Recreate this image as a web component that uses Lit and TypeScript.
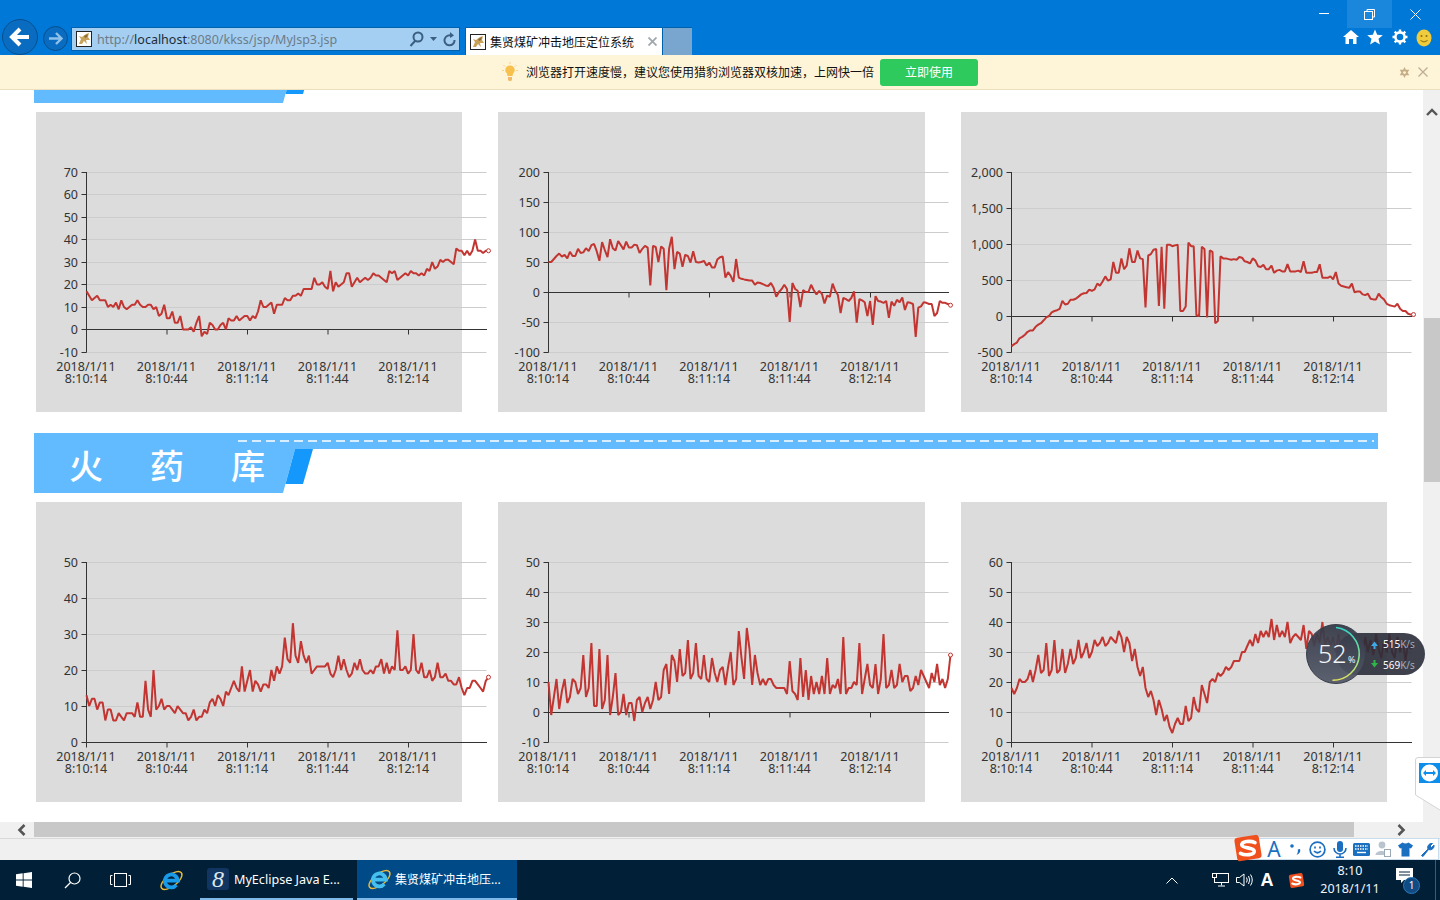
import { LitElement, html, css, svg } from "lit";
import { customElement, property } from "lit/decorators.js";

const D1 = [17,15,13,14,15,13,13,13,10,11,10,12,9,13,10,9,10,11,11,13,11,10,10,11,11,9,10,6,7,11,5,5,8,3,3,6,0,0,0,1,-1,3,6,-3,-1,-2,3,2,0,0,2,3,0,5,4,4,6,4,5,6,6,4,6,5,8,13,10,10,11,12,7,11,11,11,14,13,13,15,15,16,15,18,18,18,18,23,20,20,21,19,18,26,17,21,19,20,21,25,25,19,21,23,21,22,23,22,23,25,24,24,23,22,21,26,25,26,22,23,24,25,24,26,25,25,24,25,24,27,26,30,27,28,31,30,31,31,30,29,36,35,35,33,35,33,35,40,35,35,34,35,35];
const D2 = [50,50,55,60,64,59,62,56,67,60,60,72,65,66,73,68,78,80,68,52,83,70,58,88,73,69,85,78,71,84,74,74,79,78,65,72,77,74,11,77,75,50,76,72,3,72,92,38,67,64,42,62,60,49,68,50,49,50,52,44,49,41,41,54,58,59,24,33,27,17,55,24,22,21,20,19,19,12,16,15,13,11,10,15,7,-8,0,5,12,5,-50,15,5,2,-25,3,0,0,12,3,-4,2,-3,-19,-6,-8,14,2,-5,-35,-10,-12,-15,-10,1,-51,-12,-14,-17,-40,-15,-55,-7,-15,-16,-18,-15,-43,-16,-23,-13,-17,-9,-30,-17,-18,-20,-75,-26,-24,-17,-18,-20,-20,-40,-35,-15,-18,-18,-20,-22];
const D3 = [-420,-390,-370,-310,-290,-260,-220,-200,-200,-150,-120,-100,-60,-20,0,50,70,80,100,210,160,170,225,225,240,270,300,315,320,365,350,370,450,420,480,550,490,510,750,600,600,800,650,700,940,750,750,910,800,790,120,840,860,920,930,140,960,100,990,990,970,980,990,70,70,130,1020,970,970,10,0,960,930,-20,910,890,-100,-70,830,800,800,790,780,790,780,820,810,760,750,730,800,770,690,680,710,650,650,700,600,630,640,620,620,720,620,620,620,630,610,760,600,600,600,610,610,720,530,530,530,550,510,610,450,420,410,400,390,450,330,340,340,300,290,310,240,230,230,310,260,230,170,150,140,130,170,100,70,70,30,20,20];
const D4 = [13,10,12,12,9,11,11,6,9,9,6,6,8,7,6,8,8,8,7,11,7,7,17,9,7,20,9,10,12,9,10,10,9,8,10,9,8,8,6,7,9,6,7,7,9,8,11,12,10,13,12,10,14,13,15,17,15,14,21,14,17,20,14,17,16,14,16,16,15,20,17,21,19,21,29,23,22,33,24,22,28,24,22,24,19,20,21,21,21,21,22,19,18,20,24,20,23,20,18,19,22,20,23,20,19,19,20,19,21,21,23,19,22,19,21,20,31,20,20,21,19,20,30,20,19,22,18,18,20,17,18,22,18,18,19,17,17,16,16,18,15,13,15,15,17,17,16,15,14,17,18];
const D5 = [10,-1,5,11,1,7,11,3,5,11,10,6,8,19,5,8,23,2,2,21,1,4,19,-1,5,13,-1,0,6,-1,3,3,-3,4,5,0,3,5,1,4,10,4,5,14,16,6,19,17,10,21,12,13,24,11,13,23,12,11,19,11,10,18,13,10,14,15,9,15,20,9,11,27,18,11,28,21,9,19,13,9,11,9,11,11,9,8,8,8,8,6,17,7,6,4,18,5,14,4,12,6,10,6,12,6,18,6,9,8,11,6,25,6,8,8,10,9,23,6,11,16,9,8,16,6,11,26,8,9,14,8,9,16,10,12,12,7,8,12,9,14,12,10,8,13,10,16,9,11,8,11,19];
const D6 = [18,16,18,21,20,20,21,24,20,24,29,23,24,33,22,24,34,23,24,31,23,26,31,26,28,34,28,30,33,28,30,34,32,33,35,32,33,35,34,33,37,35,30,35,33,27,31,25,22,25,18,15,17,14,9,14,11,7,9,5,3,6,8,6,6,12,7,8,15,11,10,19,16,13,20,21,20,23,22,23,25,24,25,27,27,27,30,30,32,34,32,36,33,37,35,37,35,41,34,39,35,37,35,40,33,35,36,35,34,39,31,37,36,32,36,33,40,32,35,32,35,30,36,30,34,33,35,31,34,31,33,28,35,30,34,29,36,31,28,34,30,36,30,28,35,30,34,27,33,31,33];

const X_TICKS = [50.5, 131, 211.5, 292, 372.5];
const X_TIMES = ["8:10:14", "8:10:44", "8:11:14", "8:11:44", "8:12:14"];

@customElement("line-chart")
class LineChart extends LitElement {
  @property({ attribute: false }) data: number[] = [];
  @property({ attribute: false }) ticks: number[] = [];
  @property({ type: Boolean }) marker = true;

  static styles = css`
    :host { display: block; background: #dcdcdc; height: 300px; }
    svg { display: block; overflow: visible; font-family: "Noto Sans", sans-serif; font-size: 12.5px; }
    .grid { stroke: #ccc; stroke-width: 1; }
    .axis { stroke: #333; stroke-width: 1; fill: none; }
    .lbl { fill: #333; }
    .series { fill: none; stroke: #c23531; stroke-width: 2; stroke-linejoin: bevel; }
    .dot { fill: #fff; stroke: #c23531; stroke-width: 1; }
  `;

  render() {
    const { data, ticks } = this;
    const max = ticks[0];
    const min = ticks[ticks.length - 1];
    const y = (v: number) => 60 + ((max - v) / (max - min)) * 180;
    const x = (i: number) => 50.5 + i * 2.68;
    const yZero = Math.floor(y(0)) + 0.5;
    const pts = data.map((v, i) => `${x(i).toFixed(1)},${y(v).toFixed(1)}`).join(" ");
    const last = data.length - 1;
    return html`<svg width="426" height="300" viewBox="0 0 426 300">
      ${ticks.map((t) => {
        const gy = Math.floor(y(t)) + 0.5;
        return svg`
          <line class="grid" x1="50.5" x2="450.5" y1=${gy} y2=${gy}></line>
          <line class="axis" x1="45.5" x2="50.5" y1=${gy} y2=${gy}></line>
          <text class="lbl" x="42" y=${gy + 4.5} text-anchor="end">${t.toLocaleString("en-US")}</text>`;
      })}
      <line class="axis" x1="50.5" x2="50.5" y1="60" y2="240.5"></line>
      <line class="axis" x1="50.5" x2="451" y1=${yZero} y2=${yZero}></line>
      ${X_TICKS.map(
        (tx, i) => svg`
          <line class="axis" x1=${tx} x2=${tx} y1=${yZero} y2=${yZero + 5}></line>
          <text class="lbl" x=${tx - 0.5} y="259.3" text-anchor="middle">2018/1/11</text>
          <text class="lbl" x=${tx - 0.5} y="271.3" text-anchor="middle">${X_TIMES[i]}</text>`
      )}
      <polyline class="series" points=${pts}></polyline>
      ${this.marker ? svg`<circle class="dot" cx=${x(last)} cy=${y(data[last])} r="2"></circle>` : ""}
    </svg>`;
  }
}

const tomcat = (s: number) => html`<svg width=${s} height=${s} viewBox="0 0 16 16">
  <rect x="0.5" y="0.5" width="15" height="15" fill="#fff" stroke="#222"></rect>
  <path d="M3 13 L5 8 L3 5 L6 6 L10 3 L13 2 L12 6 L14 9 L10 9 L11 13 L8 10 L6 13 Z" fill="#c9a25a"></path>
  <path d="M8 5 L12 3 L11 6 L9 7 Z" fill="#8a6a30"></path>
</svg>`;

const ieLogo = (s: number, tone: string) => html`<svg width=${s} height=${s} viewBox="0 0 24 24">
  <ellipse cx="12" cy="12" rx="12" ry="5.5" transform="rotate(-38 12 12)" fill="none" stroke="#e8b93a" stroke-width="1.4"></ellipse>
  <path d="M6.5 12 H18 A6.2 6.2 0 1 0 16.6 16.4" fill="none" stroke=${tone} stroke-width="3.6"></path>
</svg>`;

const sLogo = (s: number) => html`<svg width=${s} height=${s} viewBox="0 0 28 28">
  <rect x="2.5" y="3" width="23" height="22" rx="3" transform="rotate(-9 14 14)" fill="#f0501e"></rect>
  <path d="M20.5 9 C16 6.8 8 7.8 8.2 11.2 C8.4 14.6 19.8 13.2 19.8 17 C19.8 20.5 11.5 21.3 7 19" fill="none" stroke="#fff" stroke-width="3.4" stroke-linecap="round"></path>
</svg>`;

@customElement("app-root")
class AppRoot extends LitElement {
  static styles = css`
    :host { display: flex; flex-direction: column; position: relative; width: 1440px; height: 900px; overflow: hidden; font-family: "Noto Sans", "Noto Sans CJK SC", sans-serif; background: #fff; }
    svg { display: block; flex: none; }

    .chrome { height: 55px; background: #0078d7; flex: none; }
    .title-row { height: 27px; display: flex; justify-content: flex-end; padding-right: 2px; }
    .win-btn { width: 45px; height: 28px; display: flex; align-items: center; justify-content: center; }
    .win-btn.close { width: 46px; }
    .win-btn.hot { background: #1a86dc; position: relative; }
    .nav-row { height: 28px; display: flex; padding-left: 2px; }
    .back { width: 36px; height: 36px; margin-top: -8px; }
    .fwd { width: 25px; height: 25px; margin: -1px 0 0 5px; }
    .addr { width: 389px; height: 24px; margin-left: 3px; box-sizing: border-box; background: #a5cff2; border: 1px solid #0062ad; display: flex; align-items: center; padding: 0 3px 0 4px; font-size: 12.5px; color: #6b7c8a; white-space: nowrap; gap: 5px; }
    .addr b { font-weight: 400; color: #1c2c38; }
    .addr .url { flex: 1; }
    .addr .tools { display: flex; align-items: center; gap: 6px; }
    .tab { width: 198px; height: 28px; margin-left: 5px; box-sizing: border-box; background: #fff; border: 1px solid #0062ad; border-bottom: none; display: flex; align-items: center; padding: 0 5px 0 4px; gap: 4px; font-size: 12px; color: #111; white-space: nowrap; }
    .tab span { flex: 1; }
    .newtab { width: 29px; height: 28px; background: #78a6cf; border-top: 1px solid #0062ad; box-sizing: border-box; }
    .spacer { flex: 1; }
    .tool-icons { display: flex; padding-right: 4px; padding-top: 2px; height: 18px; }
    .tool-icons div { width: 24.3px; display: flex; justify-content: center; }

    .notice { height: 35px; flex: none; box-sizing: border-box; background: #fef5d8; border-bottom: 1px solid #ecdfc0; display: flex; align-items: center; font-size: 12px; color: #111; padding-left: 502px; padding-right: 12px; }
    .notice .msg { margin-left: 8px; white-space: nowrap; width: 350px; }
    .go { margin-left: 4px; width: 98px; height: 27px; background: #2fca5e; border-radius: 3px; color: #fff; display: flex; align-items: center; justify-content: center; }
    .notice-end { margin-left: auto; display: flex; gap: 8px; align-items: center; }

    .middle { flex: 1; min-height: 0; display: flex; }
    .page { width: 1423px; overflow: hidden; background: #fff; }
    .sections { margin-top: -47px; padding-left: 36px; display: flex; flex-direction: column; gap: 21px; }
    .banner { margin-left: -2px; height: 60px; margin-bottom: 9px; }
    .banner text { font-family: "Noto Sans CJK SC", sans-serif; font-size: 34px; font-weight: 500; fill: #fff; text-anchor: middle; }
    .row { display: grid; grid-template-columns: 426px 427px 426px; column-gap: 36px; }
    .vbar { width: 17px; background: #f0f0f0; display: flex; flex-direction: column; align-items: center; }
    .vbar .up { height: 44px; display: flex; align-items: center; justify-content: center; }
    .vbar .thumb { margin-top: 184px; margin-left: 1px; width: 16px; height: 164px; background: #c8c8c8; }

    .hbar { height: 16px; flex: none; background: #f0f0f0; display: flex; align-items: flex-start; }
    .hbar .arr { width: 34px; height: 15px; display: flex; align-items: center; justify-content: center; padding-left: 8px; box-sizing: border-box; }
    .hbar .thumb { width: 1320px; height: 15px; background: #c8c8c8; }
    .hbar .arr.right { margin-left: 39px; width: 16px; padding: 0; }
    .status { height: 22px; flex: none; box-sizing: border-box; background: #f0f0f0; border-top: 1px solid #d9d9d9; display: flex; justify-content: flex-end; padding-right: 1px; }
    .ime-logo { margin-top: -6px; margin-right: -20px; position: relative; z-index: 1; }
    .ime { width: 196px; height: 22px; margin-top: -1px; box-sizing: border-box; background: #fff; border: 1px solid #c9dcec; display: flex; align-items: center; padding-left: 19px; }
    .ime div { width: 22px; display: flex; justify-content: center; align-items: center; font-size: 21px; line-height: 20px; color: #1b6fc0; }

    .taskbar { height: 40px; flex: none; background: #012038; display: flex; align-items: stretch; color: #fff; }
    .tb-slot { display: flex; align-items: center; justify-content: center; width: 48px; }
    .tb-slot.ie { padding-left: 6px; box-sizing: border-box; }
    .task { display: flex; align-items: center; box-sizing: border-box; border-bottom: 2px solid #7fb9e8; white-space: nowrap; }
    .task.eclipse { width: 153px; margin-left: 8px; padding-left: 7px; font-size: 12.6px; gap: 5px; }
    .task.active { width: 160px; margin-left: 4px; padding-left: 10px; background: #004a87; font-size: 12px; gap: 3px; }
    .m8 { width: 22px; height: 22px; background: #113560; border-radius: 3px; display: flex; align-items: center; justify-content: center; font: italic 24px/22px "Liberation Serif", serif; color: #dfe7ef; }
    .tray { margin-left: auto; display: flex; align-items: stretch; }
    .tb-slot.t24 { width: 24px; }
    .tb-slot.net { width: 24px; margin-left: 24px; }
    .tb-slot.a { width: 22px; font-size: 18px; font-weight: 700; font-family: "Liberation Sans", sans-serif; }
    .tb-slot.s { width: 24px; margin-left: 6px; }
    .tb-slot.note { width: 36px; }
    .clock { width: 80px; margin-left: 2px; display: flex; flex-direction: column; align-items: center; justify-content: center; font-size: 12.5px; line-height: 18px; color: #f2f5f8; }
    .badge-wrap { position: relative; width: 24px; height: 24px; }
    .badge { position: absolute; left: 7px; top: 9px; width: 15px; height: 15px; border-radius: 50%; background: #0f4b84; border: 1px solid #2e78b8; font-size: 10px; line-height: 15px; text-align: center; }
    .desk { width: 9px; border-right: 1px solid #45596a; margin-right: 4px; }

    .speed { position: absolute; left: 1306px; top: 624px; }
    .speed text { font-family: "Noto Sans", sans-serif; }
    .viewer { position: absolute; left: 1415px; top: 757px; }
  `;

  banner(text?: string[]) {
    return html`<svg class="banner" width="1344" height="60" viewBox="0 0 1344 60">
      <polygon points="0,0 1344,0 1344,16 261,16 249,60 0,60" fill="#62bbff"></polygon>
      <polygon points="261,16 279,16 269,51 251.5,51" fill="#1598fb"></polygon>
      <line x1="204" x2="1340" y1="8" y2="8" stroke="#fff" stroke-width="1.5" stroke-dasharray="9 5"></line>
      ${text
        ? svg`<text x="52" y="46">${text[0]}</text><text x="133" y="46">${text[1]}</text><text x="214" y="46">${text[2]}</text>`
        : ""}
    </svg>`;
  }

  render() {
    const t1 = [70, 60, 50, 40, 30, 20, 10, 0, -10];
    const t2 = [200, 150, 100, 50, 0, -50, -100];
    const t3 = [2000, 1500, 1000, 500, 0, -500];
    const t4 = [50, 40, 30, 20, 10, 0];
    const t5 = [50, 40, 30, 20, 10, 0, -10];
    const t6 = [60, 50, 40, 30, 20, 10, 0];
    return html`
      <header class="chrome">
        <div class="title-row">
          <div class="win-btn"><svg width="11" height="2"><rect width="10" height="1" fill="#fff"></rect></svg></div>
          <div class="win-btn hot"><svg width="11" height="11" viewBox="0 0 11 11" fill="none" stroke="#fff"><path d="M3 2.5 V0.5 H10.5 V8 H8.5"></path><rect x="0.5" y="2.5" width="8" height="8"></rect></svg></div>
          <div class="win-btn close"><svg width="11" height="11" viewBox="0 0 11 11" stroke="#fff"><path d="M0.5 0.5 L10.5 10.5 M10.5 0.5 L0.5 10.5"></path></svg></div>
        </div>
        <div class="nav-row">
          <svg class="back" viewBox="0 0 36 36">
            <circle cx="18" cy="18" r="17.5" fill="#0a6cc0" stroke="#04508f"></circle>
            <path d="M27 18 H11 M18 10 L10 18 L18 26" fill="none" stroke="#fff" stroke-width="4"></path>
          </svg>
          <svg class="fwd" viewBox="0 0 25 25">
            <circle cx="12.5" cy="12.5" r="12" fill="#0a6cc0" stroke="#04508f"></circle>
            <path d="M6 12.5 H18 M13 7 L18.5 12.5 L13 18" fill="none" stroke="#8fc0ea" stroke-width="2.4"></path>
          </svg>
          <div class="addr">
            ${tomcat(16)}
            <span class="url">http://<b>localhost</b>:8080/kkss/jsp/MyJsp3.jsp</span>
            <span class="tools">
              <svg width="15" height="16" viewBox="0 0 15 16" fill="none" stroke="#3a5f80" stroke-width="2"><circle cx="9" cy="6" r="4.5"></circle><path d="M6 10 L1.5 15"></path></svg>
              <svg width="7" height="4" viewBox="0 0 7 4"><path d="M0 0 H7 L3.5 4 Z" fill="#3a5f80"></path></svg>
              <svg width="13" height="15" viewBox="0 0 13 15" fill="none" stroke="#3a5f80" stroke-width="2"><path d="M9 4 A5 5 0 1 0 11.5 8"></path><path d="M7 0 L11 3.5 L7 6 Z" fill="#3a5f80" stroke="none"></path></svg>
            </span>
          </div>
          <div class="tab">
            ${tomcat(16)}
            <span>集贤煤矿冲击地压定位系统</span>
            <svg width="9" height="9" viewBox="0 0 9 9" stroke="#a0a8ae" stroke-width="1.8"><path d="M0.5 0.5 L8.5 8.5 M8.5 0.5 L0.5 8.5"></path></svg>
          </div>
          <div class="newtab"></div>
          <div class="spacer"></div>
          <div class="tool-icons">
            <div><svg width="16" height="16" viewBox="0 0 16 16"><path d="M8 1 L16 8 H13.5 V15 H10 V10 H6 V15 H2.5 V8 H0 Z" fill="#fff"></path></svg></div>
            <div><svg width="16" height="16" viewBox="0 0 16 16"><path d="M8 0.5 L10.2 5.8 L15.8 6.2 L11.5 9.8 L12.9 15.4 L8 12.4 L3.1 15.4 L4.5 9.8 L0.2 6.2 L5.8 5.8 Z" fill="#fff"></path></svg></div>
            <div><svg width="16" height="16" viewBox="0 0 16 16"><circle cx="8" cy="8" r="4.6" fill="none" stroke="#fff" stroke-width="2.6"></circle><path d="M8 0.5 V3 M8 13 V15.5 M0.5 8 H3 M13 8 H15.5 M2.7 2.7 L4.5 4.5 M11.5 11.5 L13.3 13.3 M13.3 2.7 L11.5 4.5 M4.5 11.5 L2.7 13.3" stroke="#fff" stroke-width="2.4"></path></svg></div>
            <div><svg width="16" height="18" viewBox="0 0 16 18"><ellipse cx="8" cy="9" rx="7.5" ry="8.5" fill="#f0cb3c"></ellipse><circle cx="5.5" cy="7" r="1" fill="#8a6d10"></circle><circle cx="10.5" cy="7" r="1" fill="#8a6d10"></circle><path d="M4.5 11.5 Q8 14.5 11.5 11.5" fill="none" stroke="#8a6d10"></path></svg></div>
          </div>
        </div>
      </header>

      <div class="notice">
        <svg width="16" height="20" viewBox="0 0 16 20">
          <path d="M8 3.5 A4.5 4.5 0 0 1 11 11.5 L10.5 14 H5.5 L5 11.5 A4.5 4.5 0 0 1 8 3.5 Z" fill="#f8c04c"></path>
          <path d="M6 15 H10 V18 L9 19 H7 L6 18 Z" fill="#f3b96a"></path>
          <path d="M8 0 V2 M1.5 3 L3 4.5 M14.5 3 L13 4.5 M0 8.5 H2 M14 8.5 H16" stroke="#f8d48c"></path>
        </svg>
        <span class="msg">浏览器打开速度慢，建议您使用猎豹浏览器双核加速，上网快一倍</span>
        <div class="go">立即使用</div>
        <div class="notice-end">
          <svg width="11" height="11" viewBox="0 0 16 16"><path d="M8 0 L10 4 H15 L12.5 8 L15 12 H10 L8 16 L6 12 H1 L3.5 8 L1 4 H6 Z" fill="#c5ad86"></path><circle cx="8" cy="8" r="2" fill="#fef5d8"></circle></svg>
          <svg width="10" height="10" viewBox="0 0 10 10" stroke="#bfae94" stroke-width="1.3"><path d="M0.5 0.5 L9.5 9.5 M9.5 0.5 L0.5 9.5"></path></svg>
        </div>
      </div>

      <div class="middle">
        <main class="page">
          <div class="sections">
            <section>
              ${this.banner()}
              <div class="row">
                <line-chart .data=${D1} .ticks=${t1}></line-chart>
                <line-chart .data=${D2} .ticks=${t2}></line-chart>
                <line-chart .data=${D3} .ticks=${t3}></line-chart>
              </div>
            </section>
            <section>
              ${this.banner(["火", "药", "库"])}
              <div class="row">
                <line-chart .data=${D4} .ticks=${t4}></line-chart>
                <line-chart .data=${D5} .ticks=${t5}></line-chart>
                <line-chart .data=${D6} .ticks=${t6} .marker=${false}></line-chart>
              </div>
            </section>
          </div>
        </main>
        <aside class="vbar">
          <div class="up"><svg width="12" height="8" viewBox="0 0 12 8" fill="none" stroke="#555" stroke-width="2.4"><path d="M1 7 L6 2 L11 7"></path></svg></div>
          <div class="thumb"></div>
        </aside>
      </div>

      <div class="hbar">
        <div class="arr"><svg width="9" height="12" viewBox="0 0 9 12" fill="none" stroke="#555" stroke-width="2.6"><path d="M7.5 1 L2.5 6 L7.5 11"></path></svg></div>
        <div class="thumb"></div>
        <div class="arr right"><svg width="9" height="12" viewBox="0 0 9 12" fill="none" stroke="#555" stroke-width="2.6"><path d="M1.5 1 L6.5 6 L1.5 11"></path></svg></div>
      </div>

      <div class="status">
        <div class="ime-logo">${sLogo(30)}</div>
        <div class="ime">
          <div>A</div>
          <div><svg width="14" height="14" viewBox="0 0 14 14" fill="#1b6fc0"><circle cx="3" cy="4" r="1.8"></circle><path d="M11 7 C12 10 10 12 7.5 13 C9 11 9 9 8.8 7.5 Z"></path></svg></div>
          <div><svg width="17" height="17" viewBox="0 0 17 17" fill="none" stroke="#1b6fc0" stroke-width="1.7"><circle cx="8.5" cy="8.5" r="7.4"></circle><path d="M5 10 Q8.5 13.5 12 10"></path><path d="M6 5.5 V7.5 M11 5.5 V7.5"></path></svg></div>
          <div><svg width="14" height="17" viewBox="0 0 14 17"><rect x="4" y="0" width="6" height="11" rx="3" fill="#1b6fc0"></rect><path d="M1 7 A6 6 0 0 0 13 7 M7 13 V16 M3 16.3 H11" fill="none" stroke="#1b6fc0" stroke-width="1.6"></path></svg></div>
          <div><svg width="17" height="13" viewBox="0 0 17 13"><rect width="17" height="13" rx="1.5" fill="#1b6fc0"></rect><path d="M2 3 H15 M2 6 H15" stroke="#fff" stroke-width="1.3" stroke-dasharray="1.5 1"></path><path d="M4 9.5 H13" stroke="#fff" stroke-width="1.4"></path></svg></div>
          <div><svg width="16" height="16" viewBox="0 0 16 16"><circle cx="7" cy="4" r="3.4" fill="#b9c4ce"></circle><path d="M0.5 14 C1 8.5 12 8.5 12.5 14 Z" fill="#b9c4ce"></path><rect x="9.5" y="8.5" width="6" height="7" fill="#fff" stroke="#9aa8b4"></rect></svg></div>
          <div><svg width="15" height="15" viewBox="0 0 15 15"><path d="M4.5 0.5 Q7.5 2.5 10.5 0.5 L15 3.5 L13 6.5 L11.5 6 V14.5 H3.5 V6 L2 6.5 L0 3.5 Z" fill="#1b6fc0"></path></svg></div>
          <div><svg width="15" height="15" viewBox="0 0 15 15"><path d="M1.5 13.5 L8 7 A4 4 0 0 1 12.5 1.5 L10 4 L11.5 5.5 L14 3 A4 4 0 0 1 8.5 7.5 L3 14.5 Z" fill="#1b6fc0" stroke="#1b6fc0"></path></svg></div>
        </div>
      </div>

      <footer class="taskbar">
        <div class="tb-slot">
          <svg width="16" height="16" viewBox="0 0 16 16" fill="#fff"><polygon points="0,2.3 6.7,1.3 6.7,7.6 0,7.6"></polygon><polygon points="7.6,1.2 16,0 16,7.6 7.6,7.6"></polygon><polygon points="0,8.4 6.7,8.4 6.7,14.7 0,13.7"></polygon><polygon points="7.6,8.4 16,8.4 16,16 7.6,14.8"></polygon></svg>
        </div>
        <div class="tb-slot">
          <svg width="17" height="17" viewBox="0 0 17 17" fill="none" stroke="#fff" stroke-width="1.2"><circle cx="10.5" cy="6.5" r="5.5"></circle><path d="M6.5 10.5 L1 16"></path></svg>
        </div>
        <div class="tb-slot">
          <svg width="21" height="14" viewBox="0 0 21 14" fill="none" stroke="#fff"><rect x="4.5" y="0.5" width="12" height="13"></rect><path d="M2.5 2.5 H0.5 V11.5 H2.5 M18.5 2.5 H20.5 V11.5 H18.5"></path></svg>
        </div>
        <div class="tb-slot ie">${ieLogo(25, "#1a9bea")}</div>
        <div class="task eclipse"><div class="m8">8</div>MyEclipse Java E...</div>
        <div class="task active">${ieLogo(25, "#45c0ee")}<span>集贤煤矿冲击地压...</span></div>
        <div class="tray">
          <div class="tb-slot t24"><svg width="12" height="7" viewBox="0 0 12 7" fill="none" stroke="#fff"><path d="M0.5 6.5 L6 1 L11.5 6.5"></path></svg></div>
          <div class="tb-slot net"><svg width="17" height="14" viewBox="0 0 17 14" fill="none" stroke="#fff"><rect x="2.5" y="0.5" width="14" height="9"></rect><rect x="0.5" y="0.5" width="4" height="4" fill="#012038"></rect><path d="M9.5 9.5 V12.5 M6 13 H13"></path></svg></div>
          <div class="tb-slot t24"><svg width="17" height="14" viewBox="0 0 17 14" fill="none" stroke="#fff"><path d="M0.5 4.5 H3.5 L8 1 V13 L3.5 9.5 H0.5 Z"></path><path d="M10.5 4.5 Q12 7 10.5 9.5 M12.5 3 Q15 7 12.5 11 M14.5 1.5 Q18 7 14.5 12.5"></path></svg></div>
          <div class="tb-slot a">A</div>
          <div class="tb-slot s">${sLogo(17)}</div>
          <div class="clock"><span>8:10</span><span>2018/1/11</span></div>
          <div class="tb-slot note">
            <div class="badge-wrap">
              <svg width="17" height="16" viewBox="0 0 17 16"><path d="M0 0 H17 V12 H8 L5 15 V12 H0 Z" fill="#fff"></path><path d="M3 4 H14 M3 7 H14" stroke="#012038"></path></svg>
              <div class="badge">1</div>
            </div>
          </div>
          <div class="desk"></div>
        </div>
      </footer>

      <svg class="speed" width="120" height="60" viewBox="0 0 120 60">
        <defs>
          <linearGradient id="ring" x1="0" y1="0" x2="0" y2="1"><stop offset="0" stop-color="#2fd6c8"></stop><stop offset="0.6" stop-color="#8fe08c"></stop><stop offset="1" stop-color="#e6e35a"></stop></linearGradient>
          <linearGradient id="disc" x1="0" y1="0" x2="0" y2="1"><stop offset="0" stop-color="#343845"></stop><stop offset="1" stop-color="#525868"></stop></linearGradient>
        </defs>
        <rect x="30" y="9" width="89" height="42" rx="21" fill="#2a2e3a" fill-opacity="0.9"></rect>
        <circle cx="30" cy="30" r="29.5" fill="url(#disc)" fill-opacity="0.93" stroke="#3a3e4a"></circle>
        <path d="M30 3.5 A26.5 26.5 0 0 1 26.5 56.3" fill="none" stroke="url(#ring)" stroke-width="1.6"></path>
        <text x="12" y="39" font-size="25" fill="#f2f4f6" font-weight="300">52</text>
        <text x="42" y="39" font-size="9" fill="#f2f4f6">%</text>
        <path d="M65 22 L68.5 17.5 L72 22 H69.5 V25 H67.5 V22 Z" fill="#3fa9e8"></path>
        <path d="M65 39 L68.5 43.5 L72 39 H69.5 V36 H67.5 V39 Z" fill="#2fb54a"></path>
        <text x="77" y="24" font-size="10" fill="#fff">515<tspan fill="#a6abb4">K/s</tspan></text>
        <text x="77" y="44.5" font-size="10" fill="#fff">569<tspan fill="#a6abb4">K/s</tspan></text>
      </svg>

      <svg class="viewer" width="25" height="54" viewBox="0 0 25 54">
        <path d="M25 0.5 H3 Q0.5 0.5 0.5 3 V38 L25 53" fill="#fff" stroke="#d4d4d4"></path>
        <rect x="4" y="6" width="21" height="20" fill="#0e8ee9"></rect>
        <circle cx="14.5" cy="16" r="8.5" fill="#fff"></circle>
        <path d="M8 16 L11 13 V15 H18 V13 L21 16 L18 19 V17 H11 V19 Z" fill="#0e8ee9"></path>
      </svg>
    `;
  }
}
